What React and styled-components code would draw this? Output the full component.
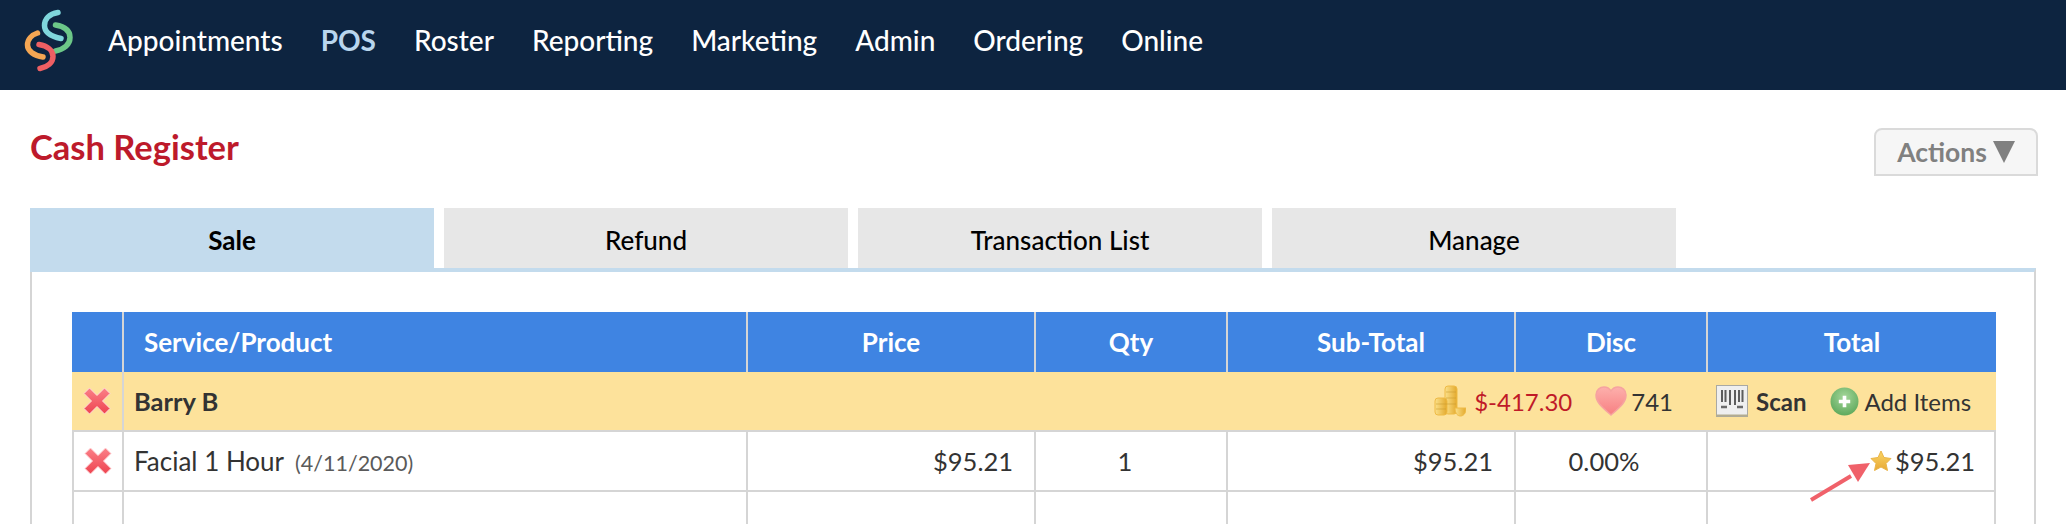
import React, { useState } from "react";
import styled, { createGlobalStyle } from "styled-components";

const menu = ["Appointments", "POS", "Roster", "Reporting", "Marketing", "Admin", "Ordering", "Online"];
const tabs = ["Sale", "Refund", "Transaction List", "Manage"];
const columns = [
    { label: "", width: 50 },
    { label: "Service/Product", width: 624, left: true },
    { label: "Price", width: 288 },
    { label: "Qty", width: 192 },
    { label: "Sub-Total", width: 288 },
    { label: "Disc", width: 192 },
    { label: "Total", width: 290 },
];

const GlobalStyle = createGlobalStyle`
    html, body {
        margin: 0;
        height: 524px;
        overflow: hidden;
        background: #ffffff;
        font-family: Lato, "Open Sans", sans-serif;
        color: #333333;
    }
`;

const Page = styled.div`
    width: 2066px;
    height: 524px;
    overflow: hidden;
`;

const TopBar = styled.nav`
    display: flex;
    align-items: center;
    height: 90px;
    padding: 0 0 10px 20px;
    box-sizing: border-box;
    background: #0d2440;
`;

const LogoMark = styled.svg`
    width: 60px;
    height: 68px;
    margin-right: 28px;
    flex: none;
`;

const MenuList = styled.div`
    display: flex;
    gap: 38px;
`;

const MenuItem = styled.a`
    font-size: 28px;
    font-weight: ${(props) => (props.active ? 700 : 500)};
    color: ${(props) => (props.active ? "#b9d6ee" : "#ffffff")};
    cursor: pointer;
`;

const Main = styled.main`
    padding: 38px 28px 0 30px;
`;

const TitleRow = styled.div`
    display: flex;
    justify-content: space-between;
    align-items: flex-start;
    height: 48px;
    margin-bottom: 32px;
`;

const Title = styled.h1`
    margin: 0;
    font-size: 34.500px;
    line-height: 38px;
    font-weight: 700;
    color: #bd1a2b;
`;

const ActionsButton = styled.button`
    display: flex;
    align-items: center;
    justify-content: center;
    gap: 6px;
    width: 164px;
    height: 48px;
    padding: 0;
    box-sizing: border-box;
    border: 2px solid #dadada;
    border-radius: 8px 8px 0 0;
    background: #f6f6f6;
    color: #808080;
    font-family: inherit;
    font-size: 26.500px;
    font-weight: 700;
`;

const Caret = styled.svg`
    width: 22px;
    height: 22px;
`;

const TabRow = styled.div`
    display: flex;
    gap: 10px;
    height: 60px;
`;

const Tab = styled.div`
    display: flex;
    align-items: center;
    justify-content: center;
    width: 404px;
    height: ${(props) => (props.active ? 64 : 60)}px;
    padding: 3px 0 ${(props) => (props.active ? 4 : 0)}px;
    box-sizing: border-box;
    background: ${(props) => (props.active ? "#c3dbed" : "#e7e7e7")};
    color: #000000;
    font-size: 26px;
    font-weight: ${(props) => (props.active ? 700 : 500)};
    cursor: pointer;
`;

const Panel = styled.section`
    margin-right: 2px;
    padding: 40px 38px 0 40px;
    border-top: 4px solid #c3dbed;
    border-left: 2px solid #d5d5d5;
    border-right: 2px solid #d5d5d5;
`;

const Grid = styled.table`
    width: 1924px;
    table-layout: fixed;
    border-collapse: separate;
    border-spacing: 0;
    font-size: 25.500px;
`;

const HeadCell = styled.th`
    height: 60px;
    padding: 0 ${(props) => (props.left ? "20px" : "0")};
    box-sizing: border-box;
    background: #3f84e2;
    color: #ffffff;
    font-size: 26px;
    font-weight: 700;
    text-align: ${(props) => (props.left ? "left" : "center")};
    border-left: ${(props) => (props.first ? "none" : "2px solid #d5d5d5")};
`;

const Cell = styled.td`
    position: relative;
    height: 60px;
    padding: 0 ${(props) => props.pad || 0}px 0 ${(props) => props.padLeft || 0}px;
    box-sizing: border-box;
    text-align: ${(props) => props.align || "left"};
    border-left: 2px solid #d5d5d5;
    border-bottom: 2px solid #d5d5d5;
    &:last-child {
        border-right: 2px solid #d5d5d5;
    }
`;

const CustomerCell = styled.td`
    height: 60px;
    padding: 0 0 0 ${(props) => props.padLeft || 0}px;
    box-sizing: border-box;
    background: #fde29b;
    font-size: 24px;
    border-bottom: 2px solid #d5d5d5;
    border-left: ${(props) => (props.divided ? "2px solid #d5d5d5" : "none")};
`;

const CustomerBar = styled.div`
    display: flex;
    align-items: center;
    justify-content: space-between;
    padding-right: 33px;
`;

const CustomerName = styled.span`
    font-size: 25.500px;
    font-weight: 700;
`;

const Stats = styled.div`
    display: flex;
    align-items: center;
    gap: 4px;
`;

const Debt = styled.span`
    margin: 0 19px 0 4px;
    color: #c01a28;
`;

const ToolBar = styled.div`
    display: flex;
    align-items: center;
    gap: 5px;
`;

const ScanLabel = styled.b`
    margin: 0 19px 0 3px;
`;

const ServiceName = styled.span`
    font-size: 26px;
`;

const ServiceDate = styled.small`
    margin-left: 11px;
    font-size: 21.500px;
    color: #5a5a5a;
`;

const TotalValue = styled.div`
    display: flex;
    align-items: center;
    justify-content: flex-end;
    gap: 3px;
`;

const Icon = styled.svg`
    display: block;
    flex: none;
    width: ${(props) => props.size || 32}px;
    height: ${(props) => props.size || 32}px;
    margin: ${(props) => (props.center ? "0 auto" : "0")};
`;

const Callout = styled.svg`
    position: absolute;
    left: 101px;
    top: 28px;
    width: 64px;
    height: 42px;
`;

const Logo = () => (
    <LogoMark viewBox="20 6 60 68" fill="none" strokeWidth="5.5" strokeLinecap="round">
        <path d="M58 12.5C49 14 44.5 19 44.5 25.5C44.5 32 51 36.5 61 38.5" stroke="#7fd6dc" />
        <path d="M55.5 25C65 26.5 70 31 70 37.5C70 44.5 64 49.5 55.5 51" stroke="#6cc788" />
        <path d="M37.5 33C31.5 35 27.5 39.5 27.5 45C27.5 51 34 55.5 43 57" stroke="#f4a653" />
        <path d="M39 44.5C47.5 46 53 50.5 53 56.5C53 62.5 47.5 67 40 68.5" stroke="#ee5f63" />
    </LogoMark>
);

const RemoveIcon = () => (
    <Icon center size={28} viewBox="0 0 28 28">
        <defs>
            <linearGradient id="removeFill" x1="0" y1="0" x2="0" y2="1">
                <stop offset="0" stopColor="#fb8088" />
                <stop offset="1" stopColor="#ee4450" />
            </linearGradient>
        </defs>
        <path d="M6.500 1L14 8.500L21.500 1L27 6.500L19.500 14L27 21.500L21.500 27L14 19.500L6.500 27L1 21.500L8.500 14L1 6.500Z" fill="url(#removeFill)" stroke="#ffd8da" strokeWidth="1" strokeLinejoin="round" />
    </Icon>
);

const CoinsIcon = () => (
    <Icon viewBox="0 0 32 32">
        <defs>
            <linearGradient id="coinFill" x1="0" y1="0" x2="1" y2="0">
                <stop offset="0" stopColor="#fbe08a" />
                <stop offset="1" stopColor="#e3a92c" />
            </linearGradient>
        </defs>
        <rect x="11" y="1" width="12" height="28" rx="3" fill="url(#coinFill)" stroke="#eeba45" />
        <rect x="1" y="13" width="12" height="17" rx="3" fill="url(#coinFill)" stroke="#eeba45" />
        <path d="M21 23H32C32 29 29 31 26.500 31C24 31 21 29 21 23Z" fill="url(#coinFill)" stroke="#eeba45" />
        <path d="M12 7H22M12 13H22M12 19H22M2 19H12M2 24H12" stroke="#c99a2e" strokeWidth="1" opacity=".55" />
    </Icon>
);

const HeartIcon = () => (
    <Icon viewBox="0 0 32 32">
        <defs>
            <linearGradient id="heartFill" x1="0" y1="0" x2="0" y2="1">
                <stop offset="0" stopColor="#fdb0ac" />
                <stop offset="1" stopColor="#f77f82" />
            </linearGradient>
        </defs>
        <path d="M16 30C8 23 1 18 1 10C1 5 5 2 9 2C12 2 14.500 3.500 16 6C17.500 3.500 20 2 23 2C27 2 31 5 31 10C31 18 24 23 16 30Z" fill="url(#heartFill)" stroke="#f6a3a0" strokeWidth="1.500" />
    </Icon>
);

const BarcodeIcon = () => (
    <Icon viewBox="0 0 32 32">
        <rect x="0.500" y="0.500" width="31" height="31" fill="#efefef" stroke="#a9a9a4" />
        <path d="M0 30.500H32" stroke="#b3ac90" strokeWidth="2" />
        <path d="M6 5V17M9.500 5V17M14 5V20M19 5V20M23 5V17M26.500 5V17" stroke="#5d5d5d" strokeWidth="2" />
        <path d="M5 22H11M21 22H27" stroke="#6a6a6a" strokeWidth="2.500" />
    </Icon>
);

const AddIcon = () => (
    <Icon size={29} viewBox="0 0 28 28">
        <defs>
            <radialGradient id="addFill" cx=".5" cy=".35" r=".7">
                <stop offset="0" stopColor="#a5d79a" />
                <stop offset="1" stopColor="#5aa658" />
            </radialGradient>
        </defs>
        <circle cx="14" cy="14" r="13.500" fill="url(#addFill)" />
        <path d="M14 8.500V19.500M8.500 14H19.500" stroke="#ffffff" strokeWidth="3.500" />
    </Icon>
);

const StarIcon = () => (
    <Icon size={22} viewBox="0 0 22 22">
        <defs>
            <linearGradient id="starFill" x1="0" y1="0" x2="0" y2="1">
                <stop offset="0" stopColor="#fbd665" />
                <stop offset="1" stopColor="#e7a835" />
            </linearGradient>
        </defs>
        <path d="M11 1L14 7.500L21 8.500L16 13.500L17.500 20.500L11 17L4.500 20.500L6 13.500L1 8.500L8 7.500Z" fill="url(#starFill)" stroke="#eab548" strokeLinejoin="round" />
    </Icon>
);

export default function App() {
    const [activeTab, setActiveTab] = useState(0);

    return (
        <Page>
            <GlobalStyle />
            <TopBar>
                <Logo />
                <MenuList>
                    {menu.map((item) => (
                        <MenuItem key={item} active={item === "POS"}>{item}</MenuItem>
                    ))}
                </MenuList>
            </TopBar>
            <Main>
                <TitleRow>
                    <Title>Cash Register</Title>
                    <ActionsButton>
                        Actions
                        <Caret viewBox="0 0 22 22"><path d="M0 0H22L11 22Z" fill="#808080" /></Caret>
                    </ActionsButton>
                </TitleRow>
                <TabRow>
                    {tabs.map((tab, index) => (
                        <Tab key={tab} active={index === activeTab} onClick={() => setActiveTab(index)}>{tab}</Tab>
                    ))}
                </TabRow>
                <Panel>
                    <Grid>
                        <colgroup>
                            {columns.map((column, index) => <col key={index} width={column.width} />)}
                        </colgroup>
                        <thead>
                            <tr>
                                {columns.map((column, index) => (
                                    <HeadCell key={index} first={index === 0} left={column.left}>{column.label}</HeadCell>
                                ))}
                            </tr>
                        </thead>
                        <tbody>
                            <tr>
                                <CustomerCell><RemoveIcon /></CustomerCell>
                                <CustomerCell colSpan={5} divided padLeft={10}>
                                    <CustomerBar>
                                        <CustomerName>Barry B</CustomerName>
                                        <Stats>
                                            <CoinsIcon />
                                            <Debt>$-417.30</Debt>
                                            <HeartIcon />
                                            <span>741</span>
                                        </Stats>
                                    </CustomerBar>
                                </CustomerCell>
                                <CustomerCell padLeft={10}>
                                    <ToolBar>
                                        <BarcodeIcon />
                                        <ScanLabel>Scan</ScanLabel>
                                        <AddIcon />
                                        <span>Add Items</span>
                                    </ToolBar>
                                </CustomerCell>
                            </tr>
                            <tr>
                                <Cell><RemoveIcon /></Cell>
                                <Cell padLeft={10}><ServiceName>Facial 1 Hour</ServiceName><ServiceDate>(4/11/2020)</ServiceDate></Cell>
                                <Cell align="right" pad={21}>$95.21</Cell>
                                <Cell align="center" pad={12}>1</Cell>
                                <Cell align="right" pad={21}>$95.21</Cell>
                                <Cell align="center" pad={14}>0.00%</Cell>
                                <Cell pad={19}>
                                    <TotalValue><StarIcon />$95.21</TotalValue>
                                    <Callout viewBox="0 0 64 42">
                                        <path d="M2 40L42 16" stroke="#f0616a" strokeWidth="4" />
                                        <path d="M61 3L39 5L49 22Z" fill="#f0616a" />
                                    </Callout>
                                </Cell>
                            </tr>
                            <tr>
                                {columns.map((column, index) => <Cell key={index} />)}
                            </tr>
                        </tbody>
                    </Grid>
                </Panel>
            </Main>
        </Page>
    );
}
